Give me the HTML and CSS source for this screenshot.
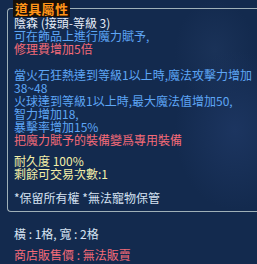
FILE: index.html
```html
<!DOCTYPE html>
<html>
<head>
<meta charset="utf-8">
<link rel="stylesheet" href="styles.css">
</head>
<body>
<div class="tooltip">
  <div class="props">
    <div class="title">道具屬性</div>
    <div class="line white">陰森 (接頭-等級 3)</div>
    <div class="line blue">可在飾品上進行魔力賦予,</div>
    <div class="line red">修理費增加5倍</div>
    <div class="gap-a"></div>
    <div class="line blue">當火石狂熱達到等級1以上時,魔法攻擊力增加</div>
    <div class="line blue">38~48</div>
    <div class="line blue">火球達到等級1以上時,最大魔法值增加50,</div>
    <div class="line blue">智力增加18,</div>
    <div class="line blue">暴擊率增加15%</div>
    <div class="line red">把魔力賦予的裝備變爲專用裝備</div>
    <div class="gap-b"></div>
    <div class="line yellow">耐久度 100%</div>
    <div class="line yellow">剩餘可交易次數:1</div>
    <div class="gap-c"></div>
    <div class="line pale">*保留所有權 *無法寵物保管</div>
  </div>
  <div class="line pale size">橫 : 1格, 寬 : 2格</div>
  <div class="line red price">商店販售價 : 無法販賣</div>
</div>
</body>
</html>
```
FILE: styles.css
```css
html, body {
  margin: 0;
  padding: 0;
}
body {
  width: 257px;
  height: 264px;
  overflow: hidden;
  background: radial-gradient(ellipse 60px 80px at 235px 130px, #1c3560 0%, rgba(28,53,96,0) 100%),
              radial-gradient(ellipse 40px 50px at 215px 50px, #1a3258 0%, rgba(26,50,88,0) 100%),
              #132a4e;
  font-family: "Noto Sans CJK TC", "Noto Sans", sans-serif;
  font-size: 12px;
}
.tooltip {
  padding-top: 8px;
}
.props {
  position: relative;
  margin-left: 7px;
  border: 1px solid #9fb0b8;
  border-right: none;
  border-radius: 4px 0 0 4px;
  padding: 7px 0 7px 6px;
}
.title {
  position: absolute;
  left: 5px;
  top: -9px;
  height: 17px;
  padding: 0 2px;
  background: #17100a;
  color: #ff9418;
  font-weight: bold;
  font-size: 13px;
  line-height: 17px;
  letter-spacing: 0.3px;
}
.line {
  height: 13px;
  line-height: 13px;
  white-space: nowrap;
}
.white { color: #e6edf8; }
.blue { color: #5ea6f6; }
.red { color: #f46a78; }
.yellow { color: #f4f0a8; }
.pale { color: #d6e2f2; }
.gap-a { height: 13px; }
.gap-b { height: 8px; }
.gap-c { height: 11px; }
.size {
  margin-top: 15px;
  margin-left: 14px;
}
.price {
  margin-top: 8px;
  margin-left: 14px;
}
```
